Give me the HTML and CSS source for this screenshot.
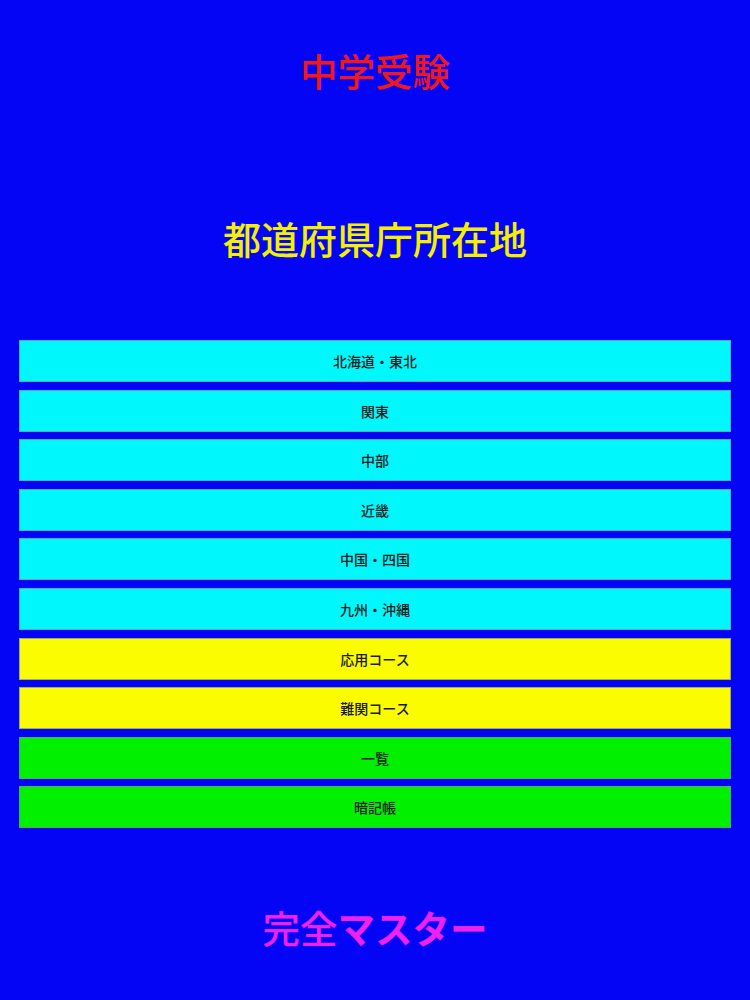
FILE: index.html
```html
<!DOCTYPE html>
<html lang="ja">
<head>
<meta charset="utf-8">
<title>中学受験 都道府県庁所在地</title>
<link rel="stylesheet" href="styles.css">
</head>
<body>
<main class="screen">
  <h1 class="title">中学受験</h1>
  <h2 class="subtitle">都道府県庁所在地</h2>
  <nav class="menu">
    <a class="btn btn-cyan">北海道・東北</a>
    <a class="btn btn-cyan">関東</a>
    <a class="btn btn-cyan">中部</a>
    <a class="btn btn-cyan">近畿</a>
    <a class="btn btn-cyan">中国・四国</a>
    <a class="btn btn-cyan">九州・沖縄</a>
    <a class="btn btn-yellow">応用コース</a>
    <a class="btn btn-yellow">難関コース</a>
    <a class="btn btn-green">一覧</a>
    <a class="btn btn-green">暗記帳</a>
  </nav>
  <p class="footer">完全<span class="kata">マスター</span></p>
</main>
</body>
</html>
```

FILE: styles.css
```css
html, body {
  margin: 0;
  padding: 0;
  background: #0505f5;
}
body {
  font-family: "Noto Sans CJK JP", "Noto Sans", sans-serif;
  width: 750px;
  height: 1000px;
  overflow: hidden;
}
.screen {
  display: flex;
  flex-direction: column;
  align-items: center;
  padding-top: 48px;
}
.title {
  margin: 0;
  font-size: 37.5px;
  line-height: 44px;
  font-weight: 500;
  color: #f01818;
}
.subtitle {
  margin: 123px 0 0;
  font-size: 38px;
  line-height: 46px;
  font-weight: 500;
  color: #f4f000;
}
.menu {
  margin-top: 79px;
  width: 712px;
  display: flex;
  flex-direction: column;
  gap: 7.6px;
}
.btn {
  box-sizing: border-box;
  height: 42px;
  display: flex;
  align-items: center;
  justify-content: center;
  border: 1px solid rgba(120, 140, 150, 0.7);
  font-size: 14px;
  font-weight: 500;
  color: #1a1a1a;
  text-decoration: none;
}
.btn-cyan { background: #00f8fc; }
.btn-yellow { background: #fcfc00; }
.btn-green { background: #00f000; }
.footer {
  margin: 76px 0 0;
  font-size: 37.5px;
  line-height: 46px;
  font-weight: 500;
  color: #f020f0;
}
.kata {
  font-weight: 700;
}
```
